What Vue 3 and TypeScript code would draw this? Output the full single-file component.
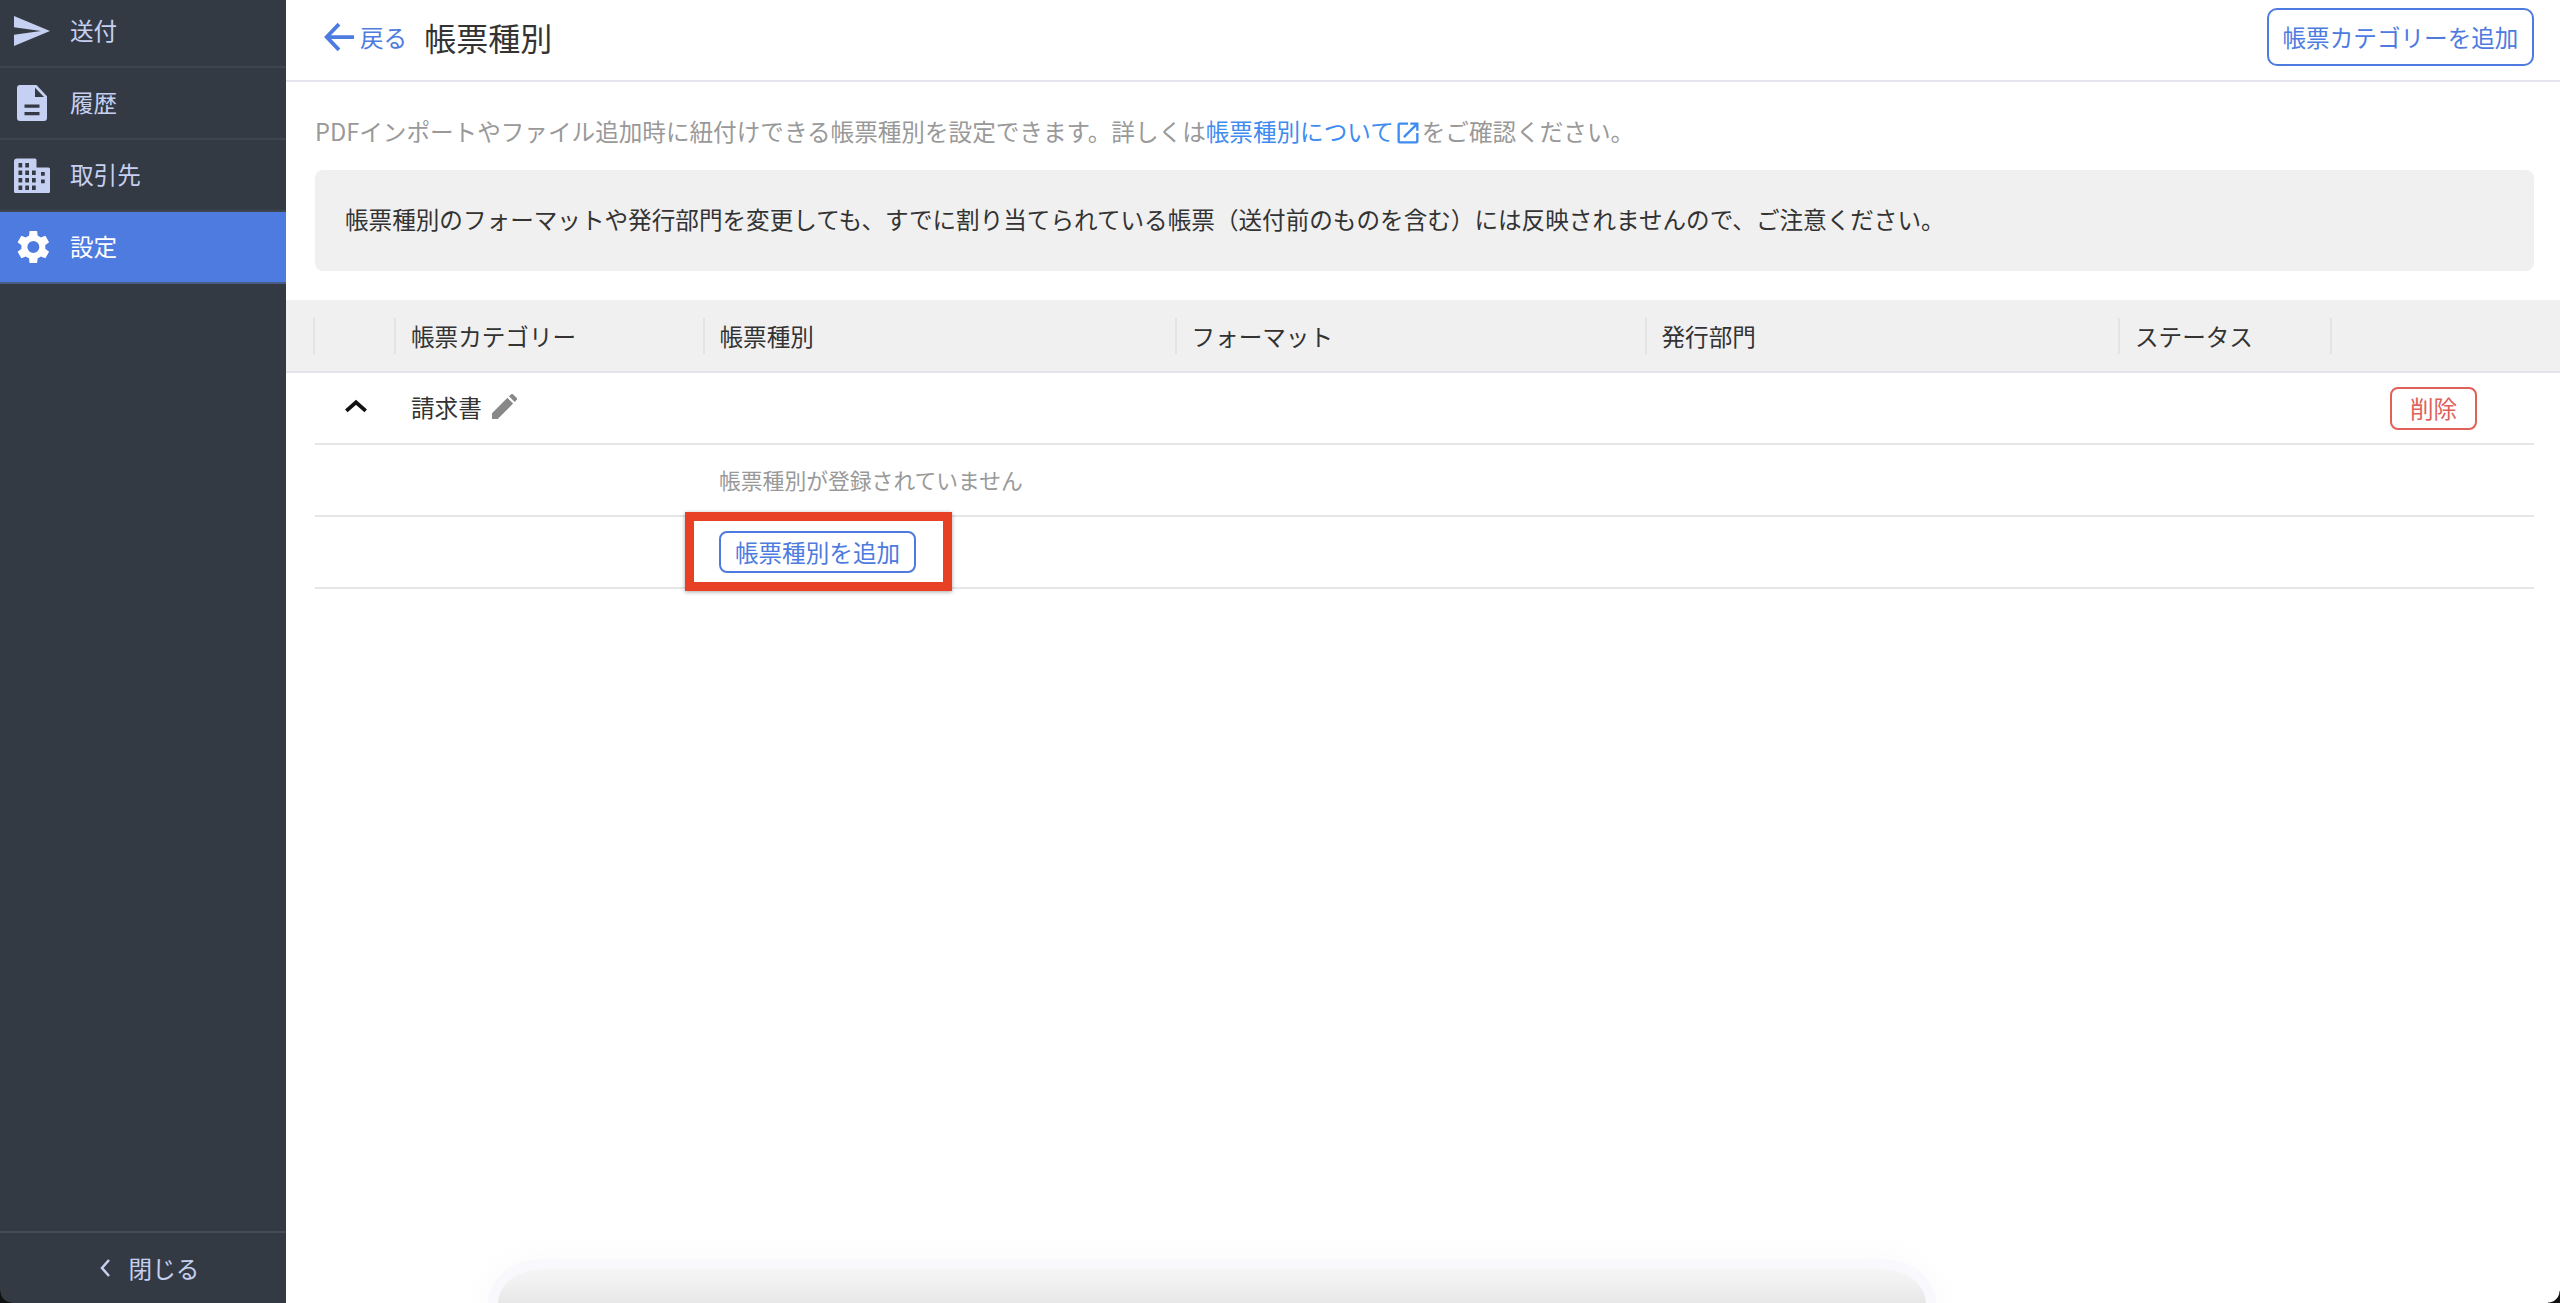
<template>
  <div class="app">
    <aside class="sidebar">
      <nav class="nav">
        <div v-for="item in navItems" :key="item.label" class="nav-item" :class="{ active: item.active }">
          <svg class="nav-icon" viewBox="0 0 24 24"><path :d="item.icon" fill-rule="evenodd" /></svg>
          <span>{{ item.label }}</span>
        </div>
      </nav>
      <div class="close">
        <svg class="close-icon" viewBox="0 0 12 20"><path d="M10 2 3 10l7 8" /></svg>
        <span>閉じる</span>
      </div>
    </aside>

    <main class="main">
      <header class="header">
        <a class="back">
          <svg class="back-icon" viewBox="0 0 28 28"><path d="M28 14H3M14 2 2.500 14 14 26" /></svg>
          <span>戻る</span>
        </a>
        <h1 class="title">帳票種別</h1>
        <button class="btn btn-large">帳票カテゴリーを追加</button>
      </header>

      <div class="intro">
        <p class="desc">
          PDFインポートやファイル追加時に紐付けできる帳票種別を設定できます。詳しくは<a class="link">帳票種別について<svg class="ext" viewBox="0 0 24 24"><path d="M19 19H5V5h7V3H5a2 2 0 0 0-2 2v14a2 2 0 0 0 2 2h14a2 2 0 0 0 2-2v-7h-2v7ZM14 3v2h3.600l-9.800 9.800 1.400 1.400L19 6.400V10h2V3h-7Z" /></svg></a>をご確認ください。
        </p>
        <div class="notice">帳票種別のフォーマットや発行部門を変更しても、すでに割り当てられている帳票（送付前のものを含む）には反映されませんので、ご注意ください。</div>
      </div>

      <div class="thead">
        <div v-for="(col, i) in columns" :key="i" class="th">{{ col }}</div>
      </div>

      <div class="tbody">
        <div class="row">
          <div class="cell cell-toggle">
            <svg class="chevron" viewBox="0 0 22 13"><path d="M2 11 11 3l9 8" /></svg>
          </div>
          <div class="cell cell-category">
            <span>請求書</span>
            <svg class="pencil" viewBox="0 0 24 24"><path d="M0 24v-5.500L14.800 3.700l5.500 5.500L5.500 24H0ZM21.800 7.700l-5.500-5.500 1.900-1.800a1.500 1.500 0 0 1 2.100 0l3.300 3.300a1.500 1.500 0 0 1 0 2.100l-1.800 1.900Z" /></svg>
          </div>
          <div class="cell cell-actions">
            <button class="btn btn-danger">削除</button>
          </div>
        </div>
        <div class="row">
          <div class="cell cell-type empty">帳票種別が登録されていません</div>
        </div>
        <div class="row">
          <div class="cell cell-type">
            <button class="btn btn-add">帳票種別を追加</button>
            <div class="highlight"></div>
          </div>
        </div>
      </div>

      <div class="dock-shadow"></div>
    </main>

    <div class="corner corner-left"></div>
    <div class="corner corner-right"></div>
  </div>
</template>

<script setup lang="ts">
interface NavItem {
  label: string
  icon: string
  active?: boolean
}

const navItems: NavItem[] = [
  { label: '送付', icon: 'M0 2V9.500L18 12 0 14.500V22L24 12 0 2Z' },
  {
    label: '履歴',
    icon: 'M5 0h10l7 7.500V22a2 2 0 0 1-2 2H4a2 2 0 0 1-2-2V2a2 2 0 0 1 2-2h1ZM14 1.800V8h6l-6-6.200ZM7 13v2.200h10V13H7Zm0 5v2.200h10V18H7Z',
  },
  {
    label: '取引先',
    icon: 'M2 1h12a1 1 0 0 1 1 1v5h8a1 1 0 0 1 1 1v15a1 1 0 0 1-1 1H1a1 1 0 0 1-1-1V3a2 2 0 0 1 2-2ZM3 4v3h2.500V4H3Zm4.500 0v3H10V4H7.500ZM3 9v3h2.500V9H3Zm4.500 0v3H10V9H7.500Zm4.500 0v3h2.500V9H12ZM3 14v3h2.500v-3H3Zm4.500 0v3H10v-3H7.500Zm4.500 0v3h2.500v-3H12ZM3 19v3h2.500v-3H3Zm4.500 0v3H10v-3H7.500Zm4.500 0v3h2.500v-3H12Zm6-9v2.500h2.500V10H18Zm0 5v2.500h2.500V15H18Z',
  },
  {
    label: '設定',
    active: true,
    icon: 'M20.800 13.200a9 9 0 0 0 0-2.400l2.600-2-2.500-4.300-3 1.200a9 9 0 0 0-2.100-1.200L15.400 1.300h-5L10 4.500a9 9 0 0 0-2.100 1.200l-3-1.200-2.500 4.300 2.600 2a9 9 0 0 0 0 2.400l-2.600 2 2.500 4.300 3-1.200a9 9 0 0 0 2.100 1.200l.4 3.200h5l.4-3.200a9 9 0 0 0 2.100-1.200l3 1.200 2.500-4.300-2.600-2ZM12.900 16a4 4 0 1 1 0-8 4 4 0 0 1 0 8Z',
  },
]

const columns = ['', '帳票カテゴリー', '帳票種別', 'フォーマット', '発行部門', 'ステータス', '']
</script>

<style>
body {
  margin: 0;
}
</style>

<style scoped>
.app {
  position: relative;
  display: flex;
  height: 1303px;
  overflow: hidden;
  font-family: "Noto Sans CJK JP", "Noto Sans", sans-serif;
  font-size: 23.600px;
  color: #333;
  background: #fff;
}

.sidebar {
  display: flex;
  flex-direction: column;
  justify-content: space-between;
  flex: 0 0 286px;
  background: #343a43;
  color: #c6d0f2;
}

.nav {
  margin-top: -4px;
}

.nav-item {
  display: flex;
  align-items: center;
  gap: 20px;
  box-sizing: border-box;
  height: 72px;
  padding-left: 14px;
  border-bottom: 2px solid #3f4550;
}

.nav-item span {
  padding-bottom: 3px;
}

.nav-item.active {
  background: #4d7be0;
  color: #fff;
  border-bottom-color: #4a5d88;
}

.nav-icon {
  flex: none;
  width: 36px;
  height: 36px;
  fill: currentColor;
}

.close {
  display: flex;
  align-items: center;
  justify-content: center;
  gap: 18px;
  box-sizing: border-box;
  height: 72px;
  padding-left: 12px;
  border-top: 2px solid #454b58;
}

.close-icon {
  width: 12px;
  height: 20px;
  fill: none;
  stroke: currentColor;
  stroke-width: 2.500;
}

.main {
  position: relative;
  flex: 1;
  min-width: 0;
}

.header {
  display: flex;
  align-items: center;
  box-sizing: border-box;
  height: 82px;
  padding: 0 26px 6px 38px;
  border-bottom: 2px solid #e4e4ee;
}

.back {
  display: flex;
  align-items: center;
  gap: 6px;
  color: #4d7be0;
}

.back-icon {
  width: 30px;
  height: 30px;
  fill: none;
  stroke: currentColor;
  stroke-width: 3.500;
}

.title {
  flex: 1;
  margin: 0 0 0 17px;
  font-size: 32px;
  font-weight: 400;
  line-height: 1.400;
}

.btn {
  box-sizing: border-box;
  padding: 0;
  font: inherit;
  background: #fff;
  color: #4d7be0;
  border: 2px solid #4d7be0;
  border-radius: 8px;
}

.btn-large {
  width: 267px;
  height: 58px;
  border-radius: 10px;
}

.btn-danger {
  width: 87px;
  height: 43px;
  color: #e0605a;
  border-color: #e0605a;
}

.btn-add {
  display: block;
  width: 197px;
  height: 42px;
}

.intro {
  padding: 31px 26px 0 29px;
}

.desc {
  margin: 0;
  color: #999;
  line-height: 36px;
}

.link {
  color: #3f8cf0;
}

.ext {
  width: 28px;
  height: 28px;
  vertical-align: -6px;
  fill: currentColor;
}

.notice {
  display: flex;
  align-items: center;
  box-sizing: border-box;
  height: 101px;
  margin-top: 21px;
  padding: 0 30px 4px;
  background: #f0f0f0;
  border-radius: 8px;
}

.thead {
  display: grid;
  grid-template-columns: 81.500px 308.500px 472px 470px 473.500px 212px 1fr;
  align-items: center;
  box-sizing: border-box;
  height: 73px;
  margin-top: 29px;
  padding-left: 26.500px;
  background: #f0f0f0;
  border-bottom: 2px solid #e4e4ee;
}

.th {
  box-sizing: border-box;
  height: 36px;
  padding-left: 15px;
  line-height: 36px;
  border-left: 2px solid #e4e4e4;
}

.tbody {
  padding: 0 26px 0 29px;
}

.row {
  display: flex;
  align-items: center;
  box-sizing: border-box;
  height: 72px;
  border-bottom: 2px solid #e6e6e6;
}

.cell-toggle {
  display: flex;
  justify-content: center;
  flex: 0 0 82px;
  padding-bottom: 5px;
}

.chevron {
  width: 24px;
  height: 14px;
  fill: none;
  stroke: #111;
  stroke-width: 3.500;
}

.cell-category {
  display: flex;
  align-items: center;
  gap: 10px;
  padding: 0 0 3px 14px;
}

.pencil {
  width: 25px;
  height: 25px;
  fill: #888;
}

.cell-actions {
  margin-left: auto;
  padding-right: 57px;
}

.cell-type {
  position: relative;
  margin-left: 404px;
}

.empty {
  padding-bottom: 2px;
  color: #999;
  font-size: 21.800px;
}

.highlight {
  position: absolute;
  top: -19px;
  left: -34px;
  box-sizing: border-box;
  width: 267px;
  height: 79px;
  border: 9px solid #e84025;
  box-shadow: 0 1px 4px rgba(0, 0, 0, 0.350);
}

.dock-shadow {
  position: absolute;
  left: 212px;
  right: 634px;
  bottom: 0;
  height: 34px;
  border-radius: 44px 44px 0 0 / 34px 34px 0 0;
  background: linear-gradient(#f5f5f5, #f1f1f2 40%, #e7e7e8);
  box-shadow: 0 0 0 10px rgba(248, 248, 253, 0.800), 0 0 26px 14px rgba(251, 251, 253, 0.900);
}

.corner {
  position: absolute;
  bottom: 0;
  width: 12px;
  height: 12px;
}

.corner-left {
  left: 0;
  background: radial-gradient(circle at 100% 0, transparent 11px, #111 12px);
}

.corner-right {
  right: 0;
  background: radial-gradient(circle at 0 0, transparent 11px, #111 12px);
}
</style>
